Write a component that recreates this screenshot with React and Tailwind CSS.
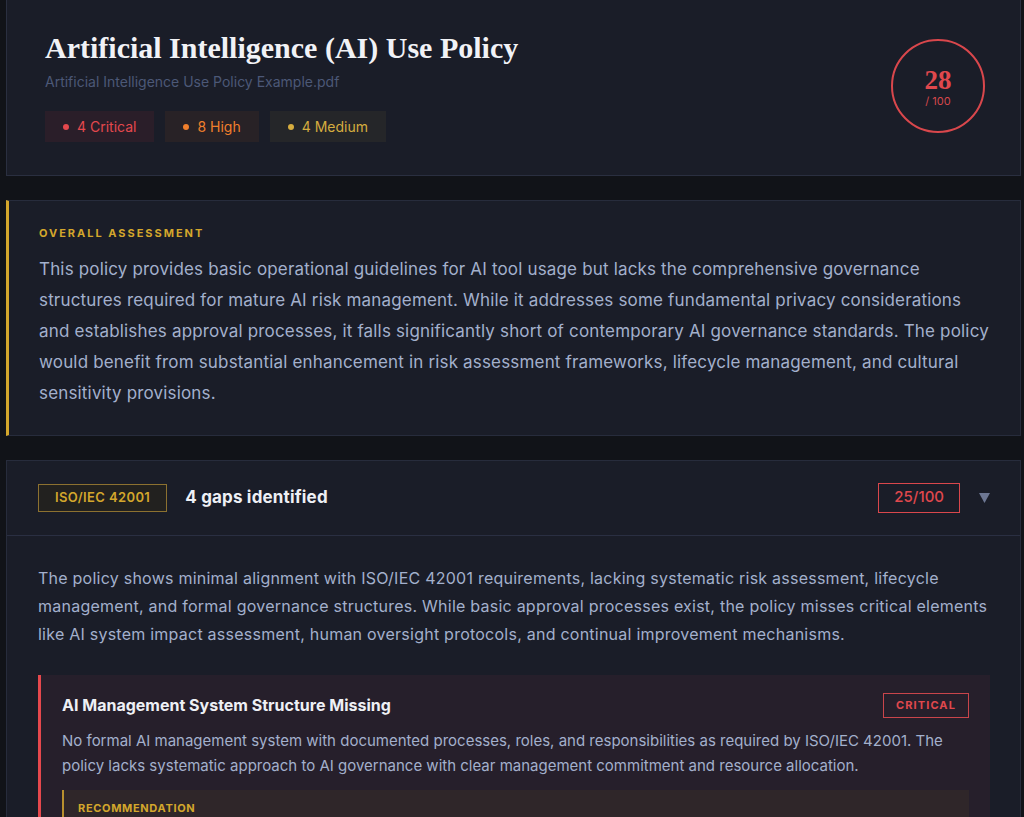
import { useState } from 'react';

const sans = 'font-["Inter","Liberation_Sans",sans-serif]';
const serif = 'font-["Liberation_Serif","DejaVu_Serif",serif]';

const counts = [
  { label: '4 Critical', dot: 'bg-[#e5484d]', text: 'text-[#e5484d]', bg: 'bg-[#2a1e29]' },
  { label: '8 High', dot: 'bg-[#f07f2c]', text: 'text-[#f07f2c]', bg: 'bg-[#282226]' },
  { label: '4 Medium', dot: 'bg-[#d6ad3f]', text: 'text-[#d6ad3f]', bg: 'bg-[#252629]' },
];

export default function App() {
  const [open, setOpen] = useState(true);

  return (
    <div className={`min-h-screen bg-[#111318] pl-[6px] pr-[3px] pb-10 ${sans}`}>
      {/* report header */}
      <div className="flex items-center justify-between border border-t-0 border-[#2a2f40] bg-[#1a1d28] pl-[38px] pr-[35px] pt-[30px] pb-[33px]">
        <div>
          <h1 className={`${serif} text-[30px] font-bold leading-[36px] text-[#f1f2f6]`}>
            Artificial Intelligence (AI) Use Policy
          </h1>
          <p className="mt-[6px] text-[14px] leading-5 text-[#4c5877]">Artificial Intelligence Use Policy Example.pdf</p>
          <div className="mt-[19px] flex gap-[11px]">
            {counts.map((c) => (
              <span key={c.label} className={`flex h-[31px] items-center gap-2 px-[18px] text-[14px] ${c.bg} ${c.text}`}>
                <span className={`h-[6px] w-[6px] rounded-full ${c.dot}`} />
                {c.label}
              </span>
            ))}
          </div>
        </div>
        <div className="flex h-[94px] w-[94px] flex-col items-center justify-center rounded-full border-2 border-[#d9474c]">
          <span className={`${serif} text-[27px] font-bold leading-7 text-[#e0484d]`}>28</span>
          <span className="mt-[1px] text-[11px] leading-3 text-[#d4484c]">/ 100</span>
        </div>
      </div>

      {/* overall assessment */}
      <div className="mt-6 border border-l-[3px] border-[#272c3c] border-l-[#d4a72c] bg-[#1a1d28] pl-[30px] pr-[30px] pt-[24px] pb-[26px]">
        <h2 className="text-[11px] font-bold uppercase tracking-[0.18em] text-[#d4a72c]">Overall Assessment</h2>
        <p className="mt-[12px] text-[17px] leading-[31px] tracking-[0.01em] text-[#a3b0cc]">
          This policy provides basic operational guidelines for AI tool usage but lacks the comprehensive governance
          structures required for mature AI risk management. While it addresses some fundamental privacy considerations
          and establishes approval processes, it falls significantly short of contemporary AI governance standards. The
          policy would benefit from substantial enhancement in risk assessment frameworks, lifecycle management, and
          cultural sensitivity provisions.
        </p>
      </div>

      {/* framework section */}
      <div className="mt-6 border border-[#272c3c] bg-[#1a1d28]">
        <button
          type="button"
          onClick={() => setOpen(!open)}
          className="flex h-[75px] w-full items-center justify-between border-b border-[#2a2f42] pl-[31px] pr-[30px] text-left"
        >
          <div className="flex items-center gap-[18px]">
            <span className="flex h-[28px] items-center border border-[#8c7130] bg-[#22211f] px-[16px] text-[13px] font-semibold tracking-[0.03em] text-[#d4a72c]">
              ISO/IEC 42001
            </span>
            <span className="text-[17px] font-bold tracking-[0.01em] text-[#eef0f5]">4 gaps identified</span>
          </div>
          <div className="flex items-center gap-[19px]">
            <span className="flex h-[30px] items-center border border-[#d9474c] px-[15px] text-[15px] font-medium text-[#e0484d]">
              25/100
            </span>
            <svg width="11" height="10" viewBox="0 0 11 10" className={open ? '' : '-rotate-90'}>
              <path d="M0 0 H11 L5.5 10 Z" fill="#6d7793" />
            </svg>
          </div>
        </button>

        {open && (
          <div className="pl-[31px] pr-[30px] pt-[28px] pb-8">
            <p className="text-[16px] leading-[28px] tracking-[0.015em] text-[#a3b0cc]">
              The policy shows minimal alignment with ISO/IEC 42001 requirements, lacking systematic risk assessment, lifecycle
              management, and formal governance structures. While basic approval processes exist, the policy misses critical
              elements like AI system impact assessment, human oversight protocols, and continual improvement mechanisms.
            </p>

            <div className="mt-[27px] border-l-[3px] border-[#e5484d] bg-[#261f2b] pl-[21px] pr-[21px] pt-[18px] pb-5">
              <div className="flex items-center justify-between">
                <h3 className="text-[16px] font-bold leading-6 text-[#eef0f5]">AI Management System Structure Missing</h3>
                <span className="flex h-[25px] items-center border border-[#c9454b] px-[12px] text-[11px] font-bold tracking-[0.1em] text-[#e0484d]">
                  CRITICAL
                </span>
              </div>
              <p className="mt-[10px] text-[15px] leading-[25px] text-[#a3b0cc]">
                No formal AI management system with documented processes, roles, and responsibilities as required by ISO/IEC 42001. The
                policy lacks systematic approach to AI governance with clear management commitment and resource allocation.
              </p>
              <div className="mt-[12px] border-l-2 border-[#b8902e] bg-[#2f2629] px-[14px] pt-[10px] pb-[10px]">
                <h4 className="text-[11px] font-bold leading-4 tracking-[0.06em] text-[#d4a72c]">RECOMMENDATION</h4>
                <p className="mt-2 text-[14px] leading-6 text-[#a3b0cc]">
                  Establish a documented AI management system defining scope, roles, responsibilities and review cycles.
                </p>
              </div>
            </div>
          </div>
        )}
      </div>
    </div>
  );
}
